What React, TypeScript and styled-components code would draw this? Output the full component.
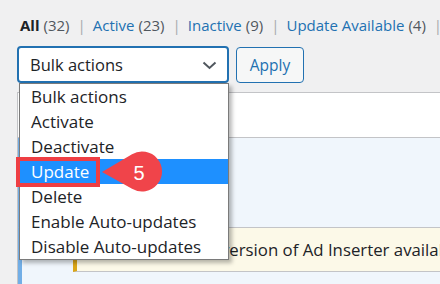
import React from "react";
import styled, { createGlobalStyle } from "styled-components";

const Global = createGlobalStyle`
  html, body { margin: 0; padding: 0; background: #f0f0f1; }
  body { font-family: "Open Sans", "Noto Sans", sans-serif; }
`;

const Page = styled.div`
  width: 440px;
  height: 284px;
  overflow: hidden;
  background: #f0f0f1;
  font-family: "Open Sans", "Noto Sans", sans-serif;
`;

const Filters = styled.ul`
  list-style: none;
  margin: 0;
  padding: 15px 0 0 20px;
  display: flex;
  align-items: baseline;
  font-size: 15px;
  line-height: 20px;
  white-space: nowrap;
`;

const Filter = styled.li`
  display: flex;
  align-items: baseline;
`;

const FilterLabel = styled.span<{ $current?: boolean }>`
  color: ${(p) => (p.$current ? "#1d2327" : "#2271b1")};
  font-weight: ${(p) => (p.$current ? 700 : 400)};
`;

const Count = styled.span`
  color: #50575e;
  margin-left: 4px;
`;

const Sep = styled.span`
  color: #a7aaad;
  padding: 0 7px 0 8px;
`;

const Toolbar = styled.div`
  display: flex;
  align-items: flex-start;
  margin: 11px 0 0 17px;
`;

const SelectWrap = styled.div`
  position: relative;
  width: 212px;
  height: 37px;
`;

const SelectBox = styled.div`
  box-sizing: border-box;
  width: 100%;
  height: 100%;
  border: 2px solid #2271b1;
  border-radius: 4px;
  background: #fff;
  display: flex;
  align-items: center;
  justify-content: space-between;
  padding: 0 10px 0 11px;
  font-size: 16.5px;
  color: #1d2327;
`;

const Chevron = styled.svg`
  width: 15px;
  height: 9px;
  margin-top: 1px;
`;

const ApplyButton = styled.button`
  box-sizing: border-box;
  margin: 1px 0 0 7px;
  width: 68px;
  height: 36px;
  border: 1px solid #2271b1;
  border-radius: 4px;
  background: #f6f7f7;
  color: #2271b1;
  font-family: "Open Sans", "Noto Sans", sans-serif;
  font-size: 15.5px;
  padding: 0;
`;

const Dropdown = styled.ul`
  position: absolute;
  top: 37px;
  left: 2px;
  width: 210px;
  box-sizing: border-box;
  margin: 0;
  padding: 0;
  list-style: none;
  background: #fff;
  border: 1px solid #7a7a7a;
  box-shadow: 3px 3px 4px rgba(0, 0, 0, 0.28);
  z-index: 5;
`;

const Option = styled.li<{ $active?: boolean }>`
  position: relative;
  height: 25px;
  line-height: 25px;
  padding-left: 11px;
  font-size: 17px;
  white-space: nowrap;
  color: ${(p) => (p.$active ? "#fff" : "#1d2327")};
  background: ${(p) => (p.$active ? "#1e90ff" : "transparent")};
`;

const Highlight = styled.span`
  position: absolute;
  left: -4px;
  top: -2px;
  width: 84px;
  height: 30px;
  box-sizing: border-box;
  border: 4px solid #ee3e43;
`;

const Callout = styled.svg`
  position: absolute;
  left: 80px;
  top: -11px;
  width: 68px;
  height: 46px;
  overflow: visible;
`;

const Table = styled.div`
  margin: 9px 0 0 17px;
  border-top: 1px solid #c3c4c7;
  border-left: 1px solid #c3c4c7;
`;

const HeadRow = styled.div`
  height: 44px;
  background: #fff;
  border-bottom: 1px solid #c3c4c7;
`;

const PluginRow = styled.div`
  height: 89px;
  background: #f0f6fc;
  border-left: 4px solid #72aee6;
  border-bottom: 1px solid #c3c4c7;
`;

const UpdateRow = styled.div`
  height: 60px;
  background: #f0f6fc;
  border-left: 4px solid #72aee6;
  padding-left: 51px;
`;

const Notice = styled.div`
  height: 43px;
  background: #fcf9e8;
  border-left: 4px solid #dba617;
  border-bottom: 1px solid #c3c4c7;
  display: flex;
  align-items: center;
  padding-left: 27px;
  white-space: nowrap;
  overflow: hidden;
  font-size: 16.8px;
  color: #1d2327;
`;

const filters = [
  { label: "All", count: 32, current: true },
  { label: "Active", count: 23 },
  { label: "Inactive", count: 9 },
  { label: "Update Available", count: 4 },
];

const options = [
  "Bulk actions",
  "Activate",
  "Deactivate",
  "Update",
  "Delete",
  "Enable Auto-updates",
  "Disable Auto-updates",
];

export default function App() {
  return (
    <Page>
      <Global />
      <Filters>
        {filters.map((f) => (
          <Filter key={f.label}>
            <FilterLabel $current={f.current}>{f.label}</FilterLabel>
            <Count>({f.count})</Count>
            <Sep>|</Sep>
          </Filter>
        ))}
      </Filters>
      <Toolbar>
        <SelectWrap>
          <SelectBox>
            <span>Bulk actions</span>
            <Chevron viewBox="0 0 15 9">
              <path d="M1.5 1.5 L7.5 7 L13.5 1.5" fill="none" stroke="#50575e" strokeWidth="2" />
            </Chevron>
          </SelectBox>
          <Dropdown>
            {options.map((o) => (
              <Option key={o} $active={o === "Update"}>
                {o}
                {o === "Update" && (
                  <>
                    <Highlight />
                    <Callout viewBox="0 0 68 46">
                      <path d="M2 24 L32 6.2 A20 20 0 1 1 32 40.8 Z" fill="#f0444a" />
                      <text
                        x="39"
                        y="32"
                        textAnchor="middle"
                        fill="#fff"
                        fontSize="20"
                        fontFamily="Liberation Sans, Arial, sans-serif"
                      >
                        5
                      </text>
                    </Callout>
                  </>
                )}
              </Option>
            ))}
          </Dropdown>
        </SelectWrap>
        <ApplyButton>Apply</ApplyButton>
      </Toolbar>
      <Table>
        <HeadRow />
        <PluginRow />
        <UpdateRow>
          <Notice>There is a new version of Ad Inserter available. View version details.</Notice>
        </UpdateRow>
      </Table>
    </Page>
  );
}
